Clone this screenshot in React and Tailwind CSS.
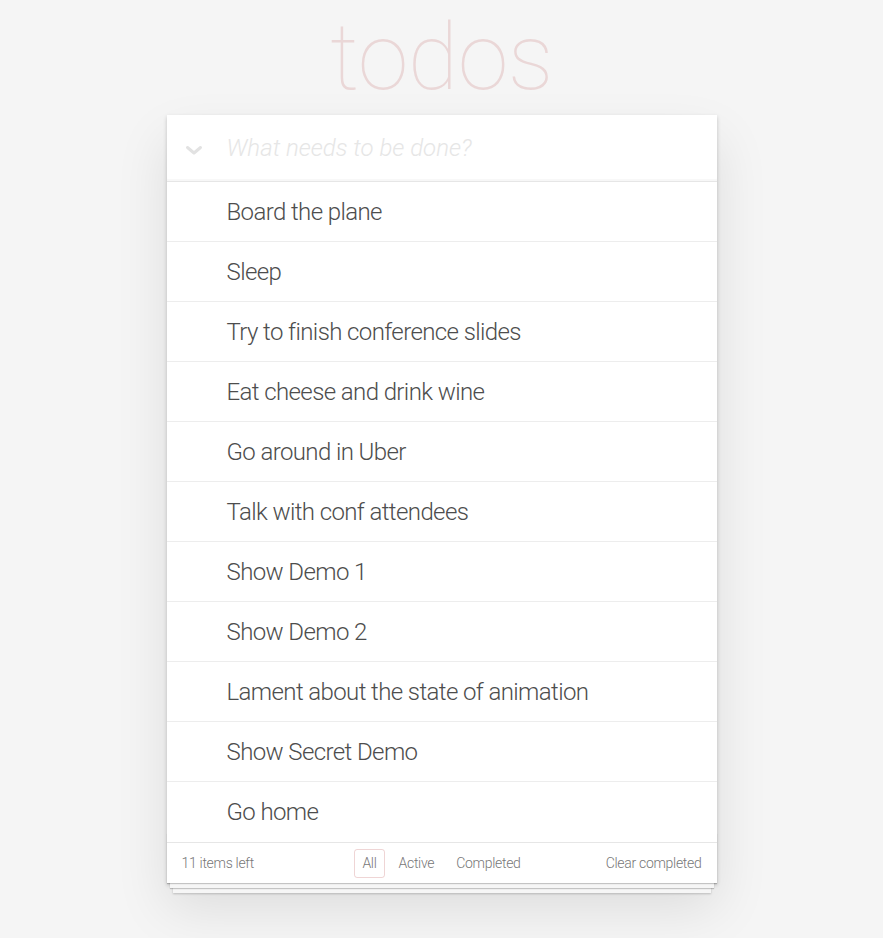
import React from "react";

const todos = [
  "Board the plane",
  "Sleep",
  "Try to finish conference slides",
  "Eat cheese and drink wine",
  "Go around in Uber",
  "Talk with conf attendees",
  "Show Demo 1",
  "Show Demo 2",
  "Lament about the state of animation",
  "Show Secret Demo",
  "Go home",
];

export default function App() {
  return (
    <div className="min-h-screen bg-[#f5f5f5] font-['Roboto','Liberation_Sans',sans-serif] font-light text-[#4d4d4d]">
      <div className="w-[550px] mx-auto">
        <h1 className="h-[115px] pt-[8px] text-center text-[92px] leading-[100px] font-thin tracking-[-0.5px] text-[rgba(175,47,47,0.15)]">
          todos
        </h1>

        <section className="relative bg-white shadow-[0_2px_4px_0_rgba(0,0,0,0.2),0_25px_50px_0_rgba(0,0,0,0.1)]">
          {/* HEADER */}
          <div className="flex items-center h-[66px] shadow-[inset_0_-2px_1px_rgba(0,0,0,0.03)]">
            <div className="w-[60px] flex justify-center items-center pr-[6px]">
              <svg width="18" height="11" viewBox="0 0 18 11" className="mt-[4px]">
                <path
                  d="M2.5 2.5 L9 8 L15.5 2.5"
                  fill="none"
                  stroke="#e2e2e2"
                  strokeWidth="3"
                  strokeLinecap="round"
                  strokeLinejoin="round"
                />
              </svg>
            </div>
            <span className="text-[24px] italic text-[#e6e6e6]">
              What needs to be done?
            </span>
          </div>

          {/* LIST */}
          <ul className="border-t border-[#e6e6e6]">
            {todos.map((t, i) => (
              <li
                key={i}
                className={
                  "h-[60px] flex items-center pl-[60px] text-[24px] tracking-[-0.6px] " +
                  (i < todos.length - 1 ? "border-b border-[#ededed]" : "")
                }
              >
                {t}
              </li>
            ))}
          </ul>

          {/* FOOTER */}
          <footer className="relative h-[41px] px-[15px] flex items-center justify-between text-[14px] tracking-[-0.3px] text-[#777] border-t border-[#e6e6e6] before:content-[''] before:absolute before:inset-x-0 before:bottom-0 before:h-[50px] before:overflow-hidden before:shadow-[0_1px_1px_rgba(0,0,0,0.2),0_8px_0_-3px_#f6f6f6,0_9px_1px_-3px_rgba(0,0,0,0.2),0_16px_0_-6px_#f6f6f6,0_17px_2px_-6px_rgba(0,0,0,0.2)]">
            <span className="relative">11 items left</span>
            <div className="absolute inset-x-0 top-0 bottom-0 flex justify-center items-center gap-[6px]">
              <span className="px-[7px] py-[3px] rounded-[3px] border border-[rgba(175,47,47,0.2)]">All</span>
              <span className="px-[7px] py-[3px] border border-transparent">Active</span>
              <span className="px-[7px] py-[3px] border border-transparent">Completed</span>
            </div>
            <span className="relative">Clear completed</span>
          </footer>
        </section>
      </div>
    </div>
  );
}
